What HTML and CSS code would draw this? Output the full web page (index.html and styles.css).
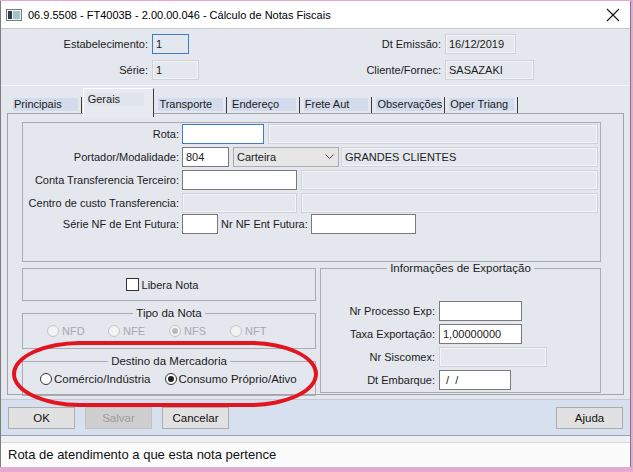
FILE: index.html
```html
<!DOCTYPE html>
<html lang="pt">
<head>
    <meta charset="UTF-8">
    <title>Cálculo de Notas Fiscais</title>
    <link rel="stylesheet" href="styles.css">
</head>
<body>
    <div class="win">
        <div class="titlebar">
            <svg class="appicon" width="16" height="12" viewBox="0 0 16 12">
                <rect x="0.5" y="0.5" width="15" height="11" fill="#f4f4f4" stroke="#7b7b7b"/>
                <rect x="2" y="2" width="4" height="8" fill="#2f3e4e"/>
                <rect x="7" y="2" width="7" height="8" fill="#9cc7c9"/>
            </svg>
            <span class="title">06.9.5508 - FT4003B - 2.00.00.046 - Cálculo de Notas Fiscais</span>
            <svg class="close" width="14" height="14" viewBox="0 0 14 14">
                <path d="M1 1 L13 13 M13 1 L1 13" stroke="#111" stroke-width="1.1"/>
            </svg>
        </div>

        <div class="header">
            <div class="fld">
                <label class="lbl-l">Estabelecimento:</label>
                <div class="ro focus w37">1</div>
            </div>
            <div class="fld">
                <label class="lbl-r">Dt Emissão:</label>
                <div class="ro w71">16/12/2019</div>
            </div>
            <div class="fld">
                <label class="lbl-l">Série:</label>
                <div class="ro w47">1</div>
            </div>
            <div class="fld">
                <label class="lbl-r">Cliente/Fornec:</label>
                <div class="ro w89">SASAZAKI</div>
            </div>
        </div>

        <div class="tabwrap">
            <div class="tabs">
                <div class="tab"><span>Principais</span></div>
                <div class="tab active"><span>Gerais</span></div>
                <div class="tab"><span>Transporte</span></div>
                <div class="tab"><span>Endereço</span></div>
                <div class="tab"><span>Frete Aut</span></div>
                <div class="tab"><span>Observações</span></div>
                <div class="tab"><span>Oper Triang</span></div>
            </div>

            <div class="panel">
                <div class="group">
                    <div class="row">
                        <label class="glbl">Rota:</label>
                        <div class="in focus w82"></div>
                        <div class="ro grow ml4"></div>
                    </div>
                    <div class="row">
                        <label class="glbl">Portador/Modalidade:</label>
                        <div class="in w47">804</div>
                        <div class="select ml4">
                            <span>Carteira</span>
                            <svg width="9" height="6" viewBox="0 0 9 6"><path d="M0.5 0.5 L4.5 4.5 L8.5 0.5" fill="none" stroke="#444"/></svg>
                        </div>
                        <div class="ro grow ml2">GRANDES CLIENTES</div>
                    </div>
                    <div class="row">
                        <label class="glbl">Conta Transferencia Terceiro:</label>
                        <div class="in w115"></div>
                        <div class="ro grow ml4"></div>
                    </div>
                    <div class="row">
                        <label class="glbl">Centro de custo Transferencia:</label>
                        <div class="ro w115"></div>
                        <div class="ro grow ml4"></div>
                    </div>
                    <div class="row last">
                        <label class="glbl">Série NF de Ent Futura:</label>
                        <div class="in w36"></div>
                        <label class="inl">Nr NF Ent Futura:</label>
                        <div class="in w105"></div>
                    </div>
                </div>

                <div class="lower">
                    <div class="leftcol">
                        <div class="libera">
                            <span class="check"></span>
                            <span>Libera Nota</span>
                        </div>

                        <fieldset class="box tipo">
                            <legend>Tipo da Nota</legend>
                            <div class="radios">
                                <span class="radio off"><i></i>NFD</span>
                                <span class="radio off"><i></i>NFE</span>
                                <span class="radio off on"><i></i>NFS</span>
                                <span class="radio off"><i></i>NFT</span>
                            </div>
                        </fieldset>

                        <fieldset class="box destino">
                            <legend>Destino da Mercadoria</legend>
                            <div class="radios big">
                                <span class="radio"><i></i>Comércio/Indústria</span>
                                <span class="radio on"><i></i>Consumo Próprio/Ativo</span>
                            </div>
                        </fieldset>
                    </div>

                    <fieldset class="box export">
                        <legend>Informações de Exportação</legend>
                        <div class="row">
                            <label class="elbl">Nr Processo Exp:</label>
                            <div class="in w83"></div>
                        </div>
                        <div class="row">
                            <label class="elbl">Taxa Exportação:</label>
                            <div class="in w83">1,00000000</div>
                        </div>
                        <div class="row">
                            <label class="elbl">Nr Siscomex:</label>
                            <div class="ro w108"></div>
                        </div>
                        <div class="row">
                            <label class="elbl">Dt Embarque:</label>
                            <div class="in w72">&nbsp;/&nbsp;&nbsp;/</div>
                        </div>
                    </fieldset>
                </div>
            </div>
        </div>

        <div class="buttons">
            <button class="btn">OK</button>
            <button class="btn" disabled>Salvar</button>
            <button class="btn">Cancelar</button>
            <button class="btn help">Ajuda</button>
        </div>

        <div class="status">
            <div class="status-text">Rota de atendimento a que esta nota pertence</div>
        </div>

        <div class="mark"></div>
    </div>
</body>
</html>
```

FILE: styles.css
```css
body {
    margin: 0;
    background: #e6a9d2;
    font-family: "Liberation Sans", Arial, sans-serif;
    font-size: 11px;
    color: #1b1b1b;
}
.win {
    position: relative;
    width: 629px;
    height: 466px;
    margin-top: 1px;
    background: #e4e7ed;
    border-left: 1px solid #7d7d7d;
    border-right: 1px solid #7d7d7d;
    display: flex;
    flex-direction: column;
}
.titlebar {
    height: 27px;
    background: #fff;
    display: flex;
    align-items: center;
    padding-left: 5px;
    padding-right: 10px;
}
.appicon {
    margin-right: 6px;
    margin-top: 1px;
}
.title {
    font-size: 11px;
    color: #000;
    flex: 1;
}
.close {
    margin-top: 1px;
}

/* header */
.header {
    height: 51px;
    border-top: 1px solid #c3c6cc;
    border-bottom: 1px solid #f4f5f7;
    padding-top: 5px;
    display: grid;
    grid-template-columns: 300px 1fr;
    row-gap: 6px;
    align-content: start;
}
.fld {
    display: flex;
    align-items: center;
}
.lbl-l {
    width: 147px;
    text-align: right;
    margin-right: 4px;
}
.lbl-r {
    width: 140px;
    text-align: right;
    margin-right: 4px;
}

/* inputs */
.in, .ro {
    box-sizing: border-box;
    height: 20px;
    line-height: 18px;
    padding: 0 3px;
    white-space: nowrap;
    overflow: hidden;
}
.in {
    background: #fff;
    border: 1px solid #7a7a7a;
}
.ro {
    background: #e4e7ed;
    border: 1px solid #cfd2d8;
    box-shadow: inset 0 0 0 1px #f3f4f7;
}
.focus {
    border-color: #3b7fc4;
    box-shadow: none;
}
.grow { flex: 1; }
.ml2 { margin-left: 2px; }
.ml4 { margin-left: 4px; }
.w36 { width: 36px; }
.w37 { width: 37px; }
.w47 { width: 47px; }
.w71 { width: 71px; }
.w72 { width: 72px; }
.w82 { width: 82px; }
.w83 { width: 83px; }
.w89 { width: 89px; }
.w105 { width: 105px; }
.w108 { width: 108px; }
.w115 { width: 115px; }

.select {
    box-sizing: border-box;
    width: 106px;
    height: 20px;
    background: #e6e6e6;
    border: 1px solid #adadad;
    display: flex;
    align-items: center;
    justify-content: space-between;
    padding: 0 4px 0 3px;
}

/* tabs */
.tabwrap {
    padding: 0 6px;
}
.tabs {
    height: 27px;
    display: flex;
    align-items: flex-end;
    padding-left: 3px;
    position: relative;
    z-index: 1;
}
.tab {
    box-sizing: border-box;
    width: 71.7px;
    height: 16px;
    margin-right: 1px;
    border-right: 1px solid #3c3c3c;
    padding: 1px 3px 2px 3px;
    white-space: nowrap;
}
.tab span {
    display: block;
    height: 13px;
    line-height: 13px;
    background: #d3dbec;
    padding-left: 1px;
}
.tab.active {
    height: 29px;
    margin-bottom: -4px;
    background: #e7eaf0;
    border-top: 1px solid #fff;
    border-left: 1px solid #fff;
    padding-top: 4px;
}
.tab.active span {
    background: #e1e5ee;
    width: 56px;
}
.panel {
    box-sizing: border-box;
    height: 282px;
    border: 1px solid #a2a4a8;
    padding: 8px 0 0 14px;
}

/* groups */
.group {
    box-sizing: border-box;
    width: 579px;
    height: 140px;
    border: 1px solid #a9acb2;
    padding: 1px 2px 0 0;
}
.row {
    display: flex;
    align-items: center;
    height: 20px;
    margin-bottom: 3px;
}
.row.last {
    margin-top: -2px;
}
.glbl {
    width: 156px;
    text-align: right;
    margin-right: 3px;
    white-space: nowrap;
}
.inl {
    margin: 0 3px;
}
.lower {
    display: flex;
    gap: 4px;
    margin-top: 6px;
}
.leftcol {
    width: 294px;
}
.libera {
    box-sizing: border-box;
    height: 33px;
    border: 1px solid #a9acb2;
    display: flex;
    align-items: center;
    justify-content: center;
    gap: 3px;
    padding-right: 14px;
}
.check {
    width: 11px;
    height: 11px;
    background: #fff;
    border: 1px solid #333;
}
.box {
    margin: 0;
    padding: 0;
    border: 1px solid #a9acb2;
    min-width: 0;
}
.box legend {
    margin: 0 auto;
    padding: 0 3px;
    line-height: 14px;
    font-size: 11.5px;
}
.tipo {
    margin-top: 5px;
    height: 41px;
}
.destino {
    margin-top: 5px;
    height: 40px;
}
.radios {
    display: flex;
    padding: 5px 0 0 24px;
}
.radio {
    display: flex;
    align-items: center;
    gap: 3px;
    width: 61px;
    white-space: nowrap;
}
.radio i {
    box-sizing: border-box;
    width: 12px;
    height: 12px;
    border: 1px solid #333;
    border-radius: 50%;
    background: #fff;
    display: flex;
    align-items: center;
    justify-content: center;
    flex: none;
}
.radio.on i::after {
    content: "";
    width: 6px;
    height: 6px;
    border-radius: 50%;
    background: #222;
}
.radio.off {
    color: #a7a9ad;
}
.radio.off i {
    border-color: #c3c5c9;
    background: #f2f3f5;
}
.radio.off.on i::after {
    background: #b9bbbf;
}
.radios.big {
    padding: 5px 0 0 17px;
    font-size: 11.5px;
}
.radios.big .radio {
    width: auto;
    margin-right: 14px;
    gap: 2px;
}
.export {
    width: 281px;
    margin-top: -7px;
    height: 132px;
    box-sizing: border-box;
    padding-top: 26px;
}
.elbl {
    width: 114px;
    text-align: right;
    margin-right: 4px;
}

/* buttons */
.buttons {
    height: 37px;
    margin-top: 4px;
    box-sizing: border-box;
    background: #d7e0ef;
    border-top: 1px solid #c3cad6;
    border-bottom: 1px solid #9aa2ae;
    display: flex;
    align-items: center;
    padding: 0 7px;
    gap: 10px;
}
.btn {
    width: 67px;
    height: 22px;
    background: #e1e1e1;
    border: 1px solid #adadad;
    font-family: "Liberation Sans", Arial, sans-serif;
    font-size: 11.5px;
    color: #111;
    padding: 0;
}
.btn:disabled {
    background: #cfcfd0;
    border-color: #c2c2c2;
    color: #9c9c9c;
}
.help {
    margin-left: auto;
}

/* status */
.status {
    flex: 1;
    background: #eef0f2;
    padding-top: 6px;
}
.status-text {
    height: 100%;
    background: #fbfbfb;
    border-top: 1px solid #d6d8db;
    padding: 4px 0 0 7px;
    font-size: 13px;
    color: #111;
    box-sizing: border-box;
}

/* red annotation drawn over the dialog */
.mark {
    position: absolute;
    left: 11px;
    top: 340px;
    width: 298px;
    height: 58px;
    border: 4px solid #e3141f;
    border-radius: 70px / 34px;
}
```
